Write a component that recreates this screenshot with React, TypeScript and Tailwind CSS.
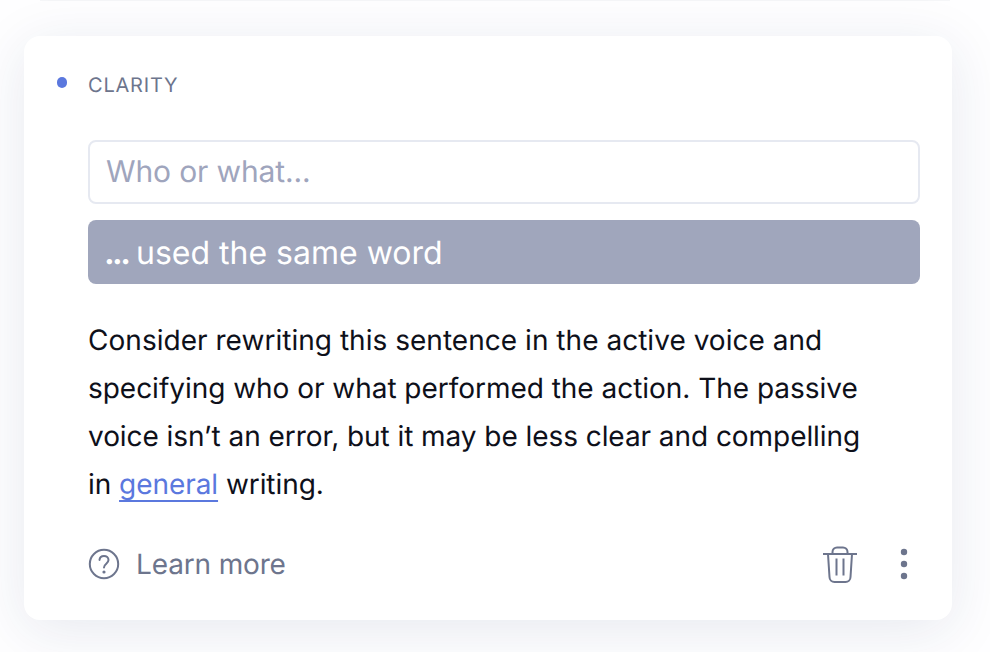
import type { ReactNode } from 'react';

const HelpIcon = () => (
  <svg className="h-8 w-8" viewBox="0 0 32 32" fill="none" stroke="currentColor" strokeWidth="2">
    <circle cx="16" cy="16" r="14.2" />
    <path d="M11.5 11.9c.2-2.5 2-3.9 4.5-3.9s4.5 1.6 4.5 4.1c0 3.5-4.5 3.7-4.5 7.4" strokeLinecap="round" />
    <circle cx="16" cy="24" r="1.6" fill="currentColor" stroke="none" />
  </svg>
);

const TrashIcon = () => (
  <svg className="h-10 w-[34px]" viewBox="0 0 34 40" fill="none" stroke="currentColor" strokeWidth="2">
    <path d="M0 10h34M9.5 10V8a4.500 4.500 0 0 1 4.500-4.500h6a4.500 4.500 0 0 1 4.500 4.500v2" />
    <path d="M5 10l1.500 23a5 5 0 0 0 5 5h11a5 5 0 0 0 5-5l1.500-23" />
    <path d="M13.500 14.500v17M20.500 14.500v17" />
  </svg>
);

const MoreIcon = () => (
  <svg className="h-8 w-2" viewBox="0 0 8 32" fill="currentColor">
    <circle cx="4" cy="4" r="3.2" />
    <circle cx="4" cy="16" r="3.2" />
    <circle cx="4" cy="28" r="3.2" />
  </svg>
);

const Line = ({ className, children }: { className: string; children: ReactNode }) => (
  <span className={`block whitespace-nowrap ${className}`}>{children}</span>
);

const App = () => {
  return (
    <main className="h-[652px] overflow-hidden bg-[#fefeff] font-['Inter',sans-serif] [text-rendering:geometricPrecision]">
      <div className="mx-10 h-px bg-[#f5f6f8]" />
      <section className="mx-6 mt-[35px] flex h-[584px] w-[928px] flex-col rounded-2xl bg-white px-8 shadow-[0_10px_56px_rgba(30,50,100,0.1)]">
        <header className="flex h-[104px] pt-[34px] text-[20px] leading-[30px] tracking-[0.8px] text-[#6d758d]">
          <span className="mt-[7px] mr-[21px] ml-[0.5px] h-[10.5px] w-[10.5px] rounded-full bg-[#5b78de]" />
          CLARITY
        </header>
        <div className="ml-8 flex flex-col">
          <div className="h-16 rounded-lg border-2 border-[#e6e9f1] px-4 text-[30px] leading-[61px] tracking-[-0.13px] text-[#9fa5bd]">
            Who or what...
          </div>
          <div className="mt-4 flex h-16 rounded-lg bg-[#a0a6bc] px-4 text-[32px] leading-[66px] text-white">
            <b className="w-8 tracking-[-2.6px]">...</b>
            <span>used the same word</span>
          </div>
          <p className="mt-8 text-[28px] leading-[48px] text-[#0e101a]">
            <Line className="tracking-[0.03px]">Consider rewriting this sentence in the active voice and</Line>
            <Line className="tracking-[-0.03px]">specifying who or what performed the action. The passive</Line>
            <Line className="tracking-[-0.06px]">voice isn’t an error, but it may be less clear and compelling</Line>
            <Line className="tracking-[-0.06px]">
              in{' '}
              <a className="text-[#5b78de] underline decoration-2 underline-offset-[6px] [text-decoration-skip-ink:none]">
                general
              </a>{' '}
              writing.
            </Line>
          </p>
          <footer className="mt-9 flex h-10 items-center text-[#6d758d]">
            <HelpIcon />
            <span className="ml-4 text-[28px] leading-10 tracking-[-0.15px]">Learn more</span>
            <button className="ml-auto">
              <TrashIcon />
            </button>
            <button className="mr-3 ml-[43px]">
              <MoreIcon />
            </button>
          </footer>
        </div>
      </section>
    </main>
  );
};

export default App;
